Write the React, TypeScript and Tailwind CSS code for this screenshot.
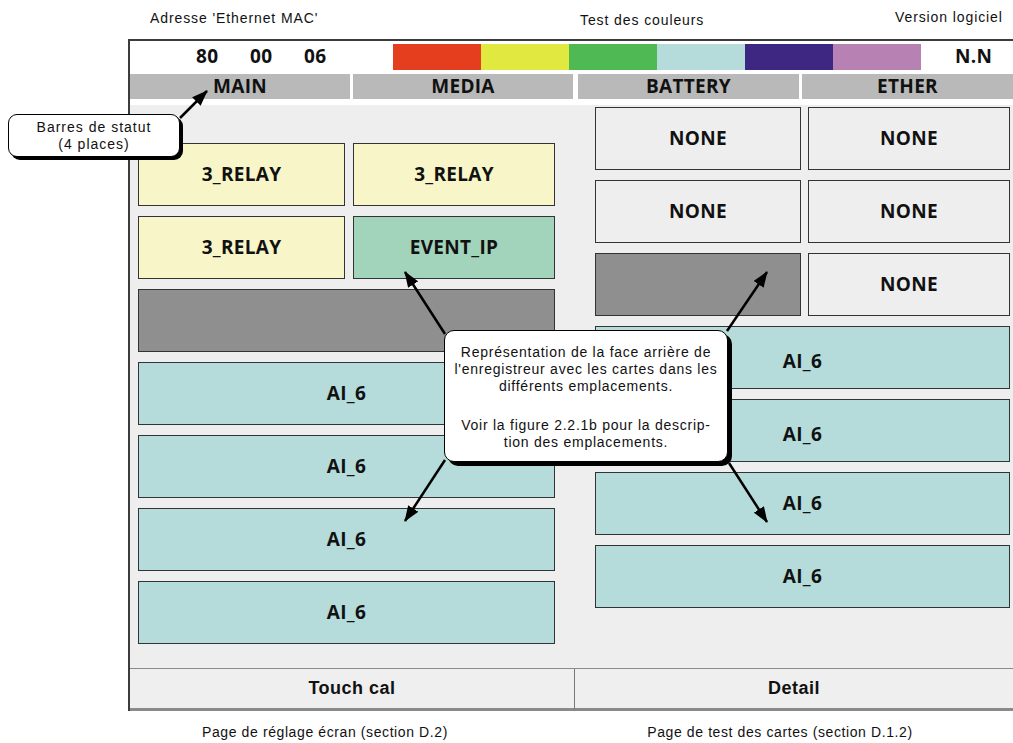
import React from "react";

const CARD = "flex h-[63px] items-center justify-center border border-[#333] font-['Open_Sans',sans-serif] text-[19px] font-bold tracking-[0.3px] text-[#111]";

function Card({ label, color, low }: { label?: string; color: string; low?: boolean }) {
  return <div className={`${CARD} ${color} ${low ? "pt-[7px]" : ""}`}>{label}</div>;
}

const bars = ["bg-[#e43e1f]", "bg-[#e1e83f]", "bg-[#4fba54]", "bg-[#b5dcdb]", "bg-[#3e2783]", "bg-[#b781b4]"];

function Arrows() {
  const lines: [number, number, number, number][] = [
    [180, 118, 207, 91],
    [445, 334, 405, 272],
    [727, 331, 767, 272],
    [445, 460, 405, 521],
    [729, 463, 767, 522],
  ];
  return (
    <svg className="pointer-events-none absolute left-0 top-0" width="1013" height="743">
      <defs>
        <marker id="head" markerUnits="userSpaceOnUse" markerWidth="16" markerHeight="12" refX="15" refY="6" orient="auto">
          <path d="M0 0 L16 6 L0 12 Z" fill="#000" />
        </marker>
      </defs>
      {lines.map(([x1, y1, x2, y2], i) => (
        <line key={i} x1={x1} y1={y1} x2={x2} y2={y2} stroke="#000" strokeWidth="2.5" markerEnd="url(#head)" />
      ))}
    </svg>
  );
}

export default function App() {
  return (
    <div className="relative h-[743px] w-[1013px] overflow-hidden bg-white font-['Liberation_Sans',Arial,sans-serif] text-[#111]">
      {/* labels above the screen */}
      <div className="flex h-[39px] pl-[150px] text-[14px] tracking-[0.9px]">
        <span className="mt-[8px] w-[430px]">Adresse 'Ethernet MAC'</span>
        <span className="mt-[10px] w-[315px]">Test des couleurs</span>
        <span className="mt-[7px]">Version logiciel</span>
      </div>

      <div className="ml-[128px] w-[885px] border-l-2 border-t-2 border-[#3c3c3c]">
        {/* MAC / colour test / version */}
        <div className="flex h-[31px] items-center font-['Open_Sans',sans-serif] text-[19px] font-bold tracking-[0.3px]">
          <div className="flex pl-[66px]">
            <span className="w-[54px]">80</span>
            <span className="w-[54px]">00</span>
            <span className="w-[54px]">06</span>
          </div>
          <div className="ml-[35px] flex h-[26px]">
            {bars.map((b) => (
              <div key={b} className={`h-full w-[88px] ${b}`} />
            ))}
          </div>
          <span className="ml-[34px]">N.N</span>
        </div>

        {/* status bars */}
        <div className="mt-[2px] flex h-[25px] font-['Open_Sans',sans-serif] text-[19px] font-bold leading-[25px] tracking-[0.3px]">
          <div className="w-[220px] bg-[#b9b9b9] text-center">MAIN</div>
          <div className="ml-[3px] w-[220px] bg-[#b9b9b9] text-center">MEDIA</div>
          <div className="ml-[5px] w-[221px] bg-[#b9b9b9] text-center">BATTERY</div>
          <div className="ml-[3px] flex-1 bg-[#b9b9b9] text-center">ETHER</div>
        </div>

        {/* card slots */}
        <div className="mt-[6px] flex h-[563px] bg-[#eeeeee]">
          <div className="ml-[8px] flex w-[417px] flex-col gap-[10px] pt-[38px]">
            <div className="grid grid-cols-[207px_1fr] gap-[8px]">
              <Card label="3_RELAY" color="bg-[#f8f6c8]" />
              <Card label="3_RELAY" color="bg-[#f8f6c8]" />
            </div>
            <div className="grid grid-cols-[207px_1fr] gap-[8px]">
              <Card label="3_RELAY" color="bg-[#f8f6c8]" />
              <Card label="EVENT_IP" color="bg-[#a2d3bb]" />
            </div>
            <Card color="bg-[#8f8f8f]" />
            <Card label="AI_6" color="bg-[#b5dcdb]" />
            <Card label="AI_6" color="bg-[#b5dcdb]" />
            <Card label="AI_6" color="bg-[#b5dcdb]" />
            <Card label="AI_6" color="bg-[#b5dcdb]" />
          </div>
          <div className="ml-[40px] flex w-[415px] flex-col gap-[10px] pt-[2px]">
            <div className="grid grid-cols-[206px_1fr] gap-[7px]">
              <Card label="NONE" color="bg-[#eeeeee]" />
              <Card label="NONE" color="bg-[#eeeeee]" />
            </div>
            <div className="grid grid-cols-[206px_1fr] gap-[7px]">
              <Card label="NONE" color="bg-[#eeeeee]" />
              <Card label="NONE" color="bg-[#eeeeee]" />
            </div>
            <div className="grid grid-cols-[206px_1fr] gap-[7px]">
              <Card color="bg-[#8f8f8f]" />
              <Card label="NONE" color="bg-[#eeeeee]" />
            </div>
            <Card label="AI_6" color="bg-[#b5dcdb]" low />
            <Card label="AI_6" color="bg-[#b5dcdb]" low />
            <Card label="AI_6" color="bg-[#b5dcdb]" />
            <Card label="AI_6" color="bg-[#b5dcdb]" />
          </div>
        </div>

        {/* buttons */}
        <div className="flex h-[43px] border-t border-[#8a8a8a] text-[18px] font-bold tracking-[0.5px]">
          <button className="w-[445px] border-b-[3px] border-r border-b-[#8a8a8a] border-r-[#777] bg-[#efefef]">Touch cal</button>
          <button className="flex-1 border-b-[3px] border-b-[#8a8a8a] bg-[#efefef]">Detail</button>
        </div>
      </div>

      {/* captions */}
      <div className="flex pl-[128px] pt-[11px] text-[14px] tracking-[0.6px]">
        <span className="w-[394px] shrink-0 text-center">Page de réglage écran (section D.2)</span>
        <span className="w-[516px] shrink-0 text-center">Page de test des cartes (section D.1.2)</span>
      </div>

      <Arrows />

      {/* callouts */}
      <div className="absolute left-[8px] top-[114px] flex h-[43px] w-[172px] flex-col items-center justify-center rounded-[9px] border border-black bg-white text-[14px] leading-[17px] tracking-[1px] shadow-[3px_3px_0_#000]">
        <span>Barres de statut</span>
        <span>(4 places)</span>
      </div>
      <div className="absolute left-[444px] top-[330px] h-[132px] w-[284px] rounded-[10px] border border-black bg-white pt-[13px] text-center text-[14px] leading-[17px] tracking-[0.75px] shadow-[4px_4px_0_#000]">
        <p>
          Représentation de la face arrière de
          <br />
          l'enregistreur avec les cartes dans les
          <br />
          différents emplacements.
        </p>
        <p className="mt-[22px]">
          Voir la figure 2.2.1b pour la descrip-
          <br />
          tion des emplacements.
        </p>
      </div>
    </div>
  );
}
